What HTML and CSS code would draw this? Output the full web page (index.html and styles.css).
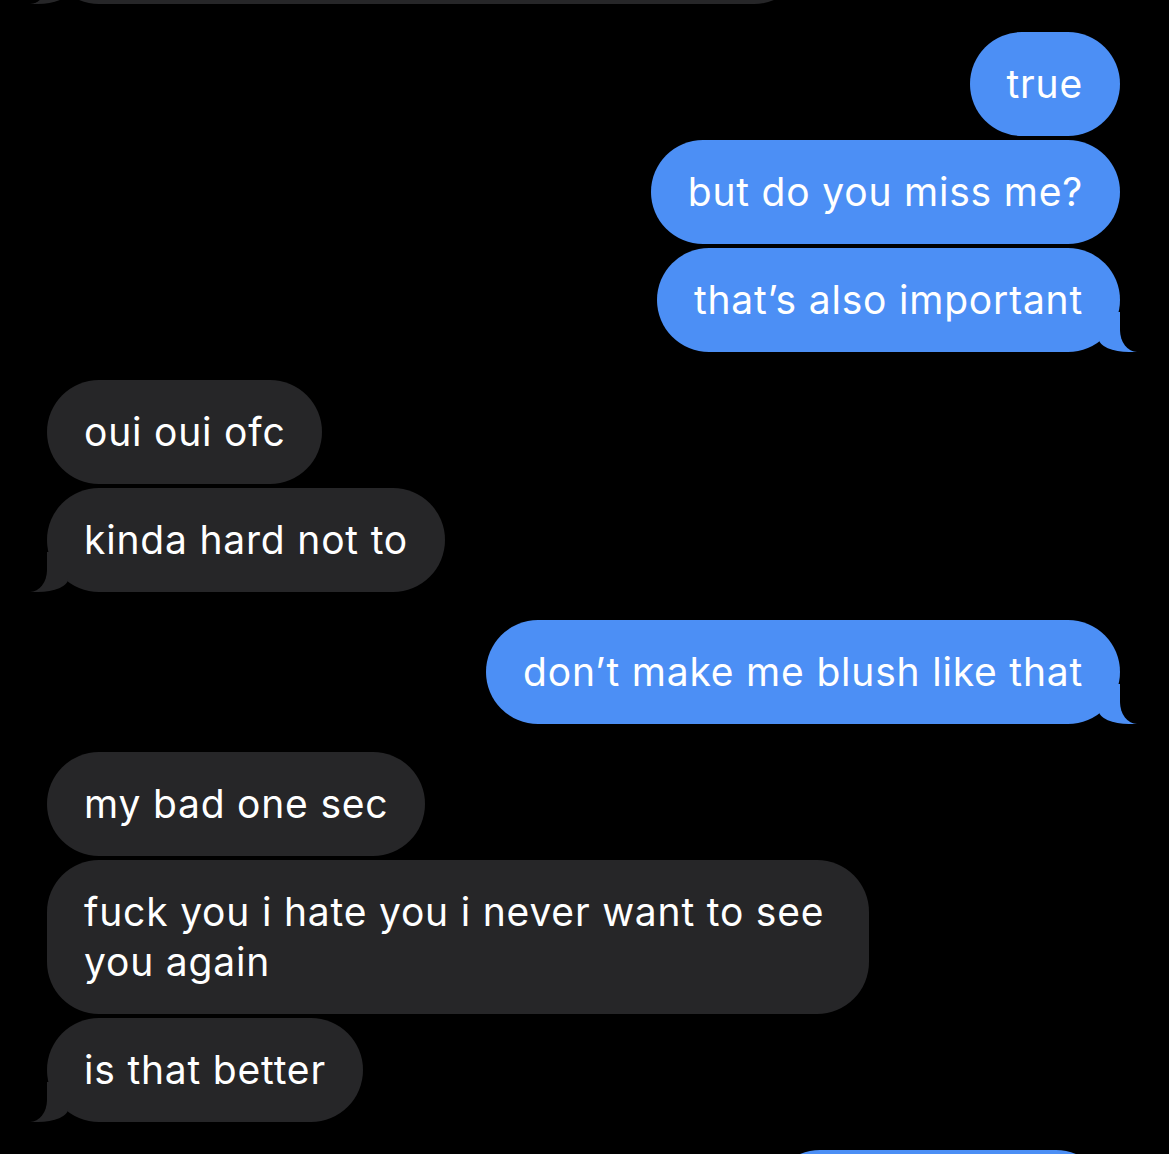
FILE: index.html
```html
<!DOCTYPE html>
<html lang="en">
<head>
<meta charset="utf-8">
<title>Messages</title>
<link rel="stylesheet" href="styles.css">
</head>
<body>
<div class="thread">
  <div class="group recv">
    <div class="bubble recv tail stub-top"></div>
  </div>
  <div class="group sent">
    <div class="bubble sent">true</div>
    <div class="bubble sent">but do you miss me?</div>
    <div class="bubble sent tail">that’s also important</div>
  </div>
  <div class="group recv">
    <div class="bubble recv">oui oui ofc</div>
    <div class="bubble recv tail">kinda hard not to</div>
  </div>
  <div class="group sent">
    <div class="bubble sent tail">don’t make me blush like that</div>
  </div>
  <div class="group recv">
    <div class="bubble recv">my bad one sec</div>
    <div class="bubble recv">fuck you i hate you i never want to see you again</div>
    <div class="bubble recv tail">is that better</div>
  </div>
  <div class="group sent">
    <div class="bubble sent stub-bottom"></div>
  </div>
</div>
</body>
</html>
```
FILE: styles.css
```css
html, body {
  margin: 0;
  padding: 0;
  background: #000;
  overflow: hidden;
  height: 1154px;
}

.thread {
  display: flex;
  flex-direction: column;
  gap: 28px;
  padding: 0 49px 0 47px;
  font-family: Inter, "Noto Sans", "DejaVu Sans", sans-serif;
  color: #fff;
}

.group {
  display: flex;
  flex-direction: column;
  gap: 4px;
}

.group.sent { align-items: flex-end; }
.group.recv { align-items: flex-start; }

.bubble {
  position: relative;
  box-sizing: border-box;
  max-width: 822px;
  padding: 27px 37px;
  font-size: 39px;
  line-height: 50px;
  border-radius: 52px;
  letter-spacing: 0.8px;
}

.bubble.sent { background: #4c8ff5; }
.bubble.recv { background: #262628; }

.stub-top {
  width: 759px;
  height: 104px;
  margin-top: -100px;
}

.stub-bottom {
  width: 340px;
  height: 104px;
  margin-right: 12px;
}

/* tails */
.bubble.tail::before,
.bubble.tail::after {
  content: "";
  position: absolute;
  bottom: 0;
  height: 40px;
}

.bubble.sent.tail::before {
  right: -17px;
  width: 38px;
  background: #4c8ff5;
  border-bottom-left-radius: 30px 13px;
}

.bubble.sent.tail::after {
  right: -44px;
  width: 44px;
  background: #000;
  border-bottom-left-radius: 17px 22px;
}

.bubble.recv.tail::before {
  left: -17px;
  width: 38px;
  background: #262628;
  border-bottom-right-radius: 30px 13px;
}

.bubble.recv.tail::after {
  left: -44px;
  width: 44px;
  background: #000;
  border-bottom-right-radius: 17px 22px;
}
```
